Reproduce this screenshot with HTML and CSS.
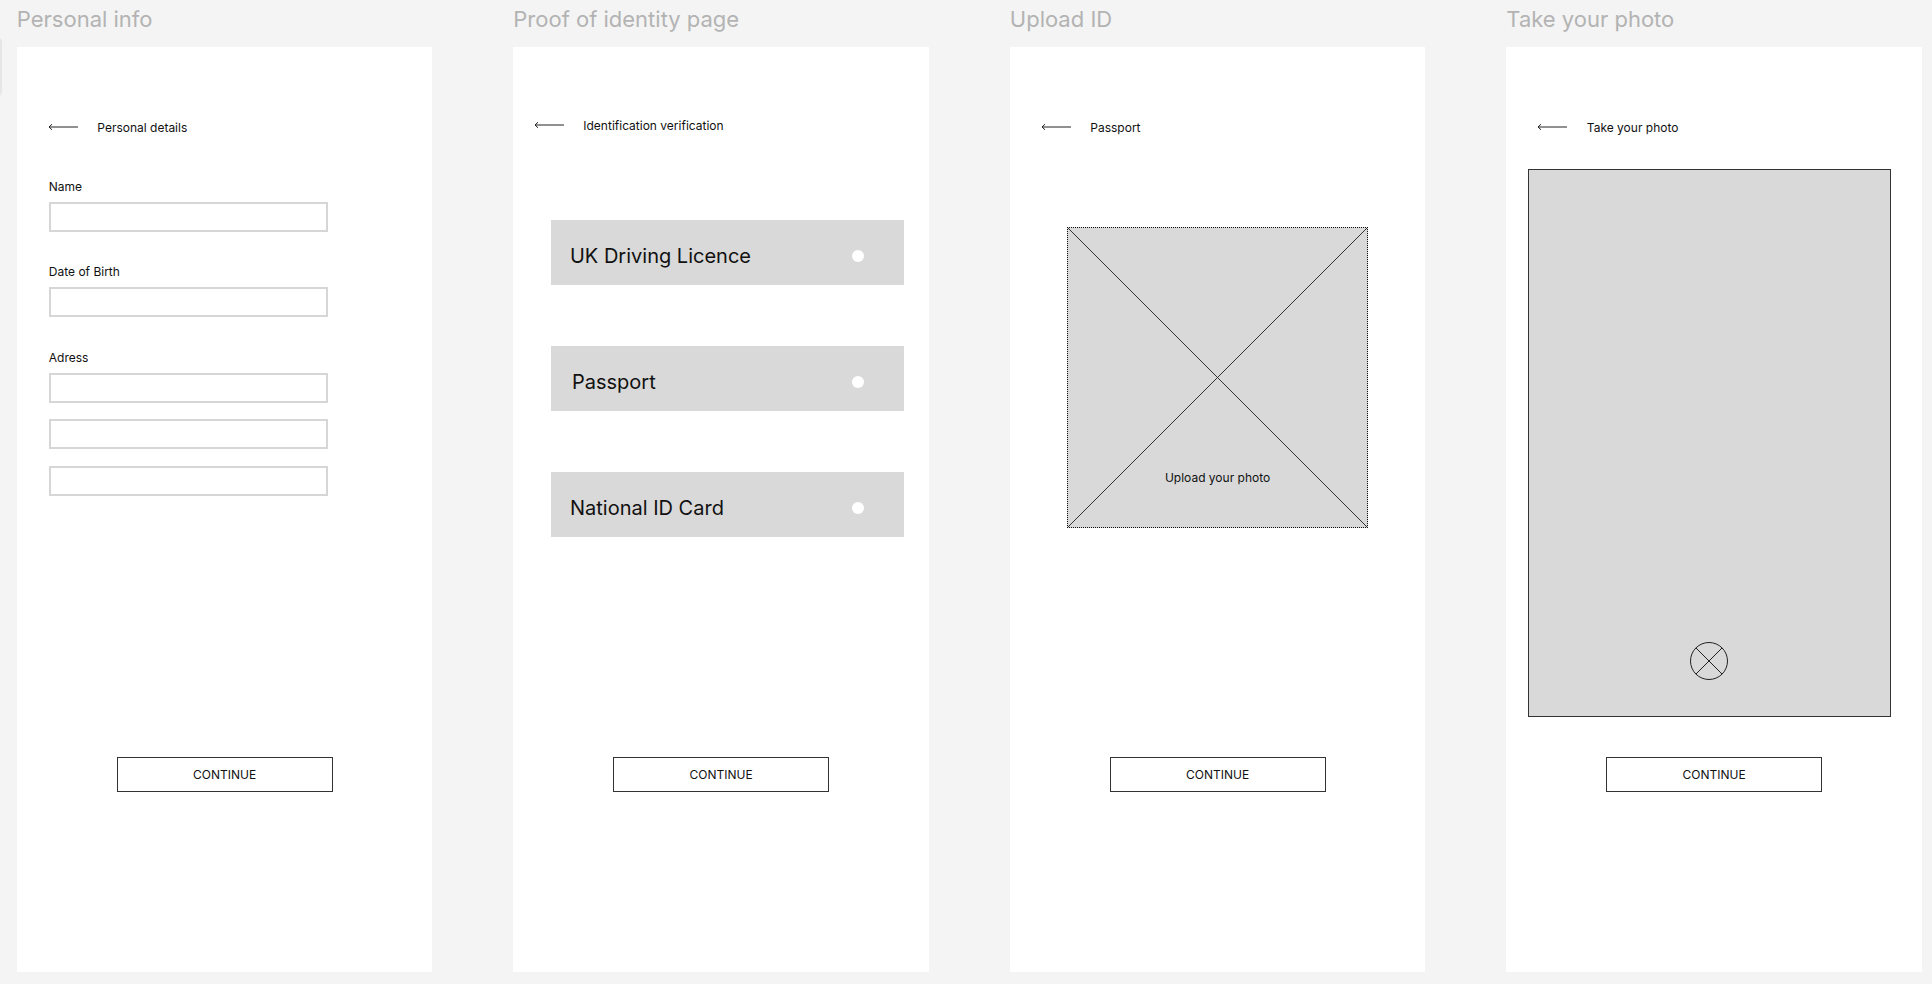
FILE: index.html
```html
<!DOCTYPE html>
<html lang="en">
<head>
<meta charset="utf-8">
<title>Identity verification wireframes</title>
<link rel="stylesheet" href="styles.css">
</head>
<body>
<div class="edge-tab"></div>
<main class="board">

  <section class="column">
    <h2 class="title">Personal info</h2>
    <div class="frame">
      <div class="header">
        <svg class="back" width="30" height="8" viewBox="0 0 30 8"><path d="M1 4H30M4 1.2L1 4L4 6.8" fill="none" stroke="#222" stroke-width="1"/></svg>
        <span>Personal details</span>
      </div>
      <div class="content form">
        <label class="label">Name</label>
        <div class="input"></div>
        <label class="label gap-top">Date of Birth</label>
        <div class="input"></div>
        <label class="label gap-top">Adress</label>
        <div class="input"></div>
        <div class="input stack"></div>
        <div class="input stack"></div>
      </div>
      <button class="continue">CONTINUE</button>
    </div>
  </section>

  <section class="column">
    <h2 class="title">Proof of identity page</h2>
    <div class="frame">
      <div class="header header-tight">
        <svg class="back" width="30" height="8" viewBox="0 0 30 8"><path d="M1 4H30M4 1.2L1 4L4 6.8" fill="none" stroke="#222" stroke-width="1"/></svg>
        <span>Identification verification</span>
      </div>
      <div class="content options">
        <div class="option"><span>UK Driving Licence</span><i class="dot"></i></div>
        <div class="option option-indent"><span>Passport</span><i class="dot"></i></div>
        <div class="option"><span>National ID Card</span><i class="dot"></i></div>
      </div>
      <button class="continue">CONTINUE</button>
    </div>
  </section>

  <section class="column">
    <h2 class="title">Upload ID</h2>
    <div class="frame">
      <div class="header">
        <svg class="back" width="30" height="8" viewBox="0 0 30 8"><path d="M1 4H30M4 1.2L1 4L4 6.8" fill="none" stroke="#222" stroke-width="1"/></svg>
        <span>Passport</span>
      </div>
      <div class="content upload-area">
        <div class="upload-box">
          <svg class="cross" viewBox="0 0 100 100" preserveAspectRatio="none"><path d="M0 0L100 100M100 0L0 100" stroke="#333" stroke-width="1" vector-effect="non-scaling-stroke" fill="none"/></svg>
          <span class="upload-text">Upload your photo</span>
        </div>
      </div>
      <button class="continue">CONTINUE</button>
    </div>
  </section>

  <section class="column">
    <h2 class="title">Take your photo</h2>
    <div class="frame">
      <div class="header">
        <svg class="back" width="30" height="8" viewBox="0 0 30 8"><path d="M1 4H30M4 1.2L1 4L4 6.8" fill="none" stroke="#222" stroke-width="1"/></svg>
        <span>Take your photo</span>
      </div>
      <div class="content camera-area">
        <div class="camera">
          <svg class="shutter" width="40" height="40" viewBox="0 0 40 40"><circle cx="20" cy="20" r="18.5" fill="none" stroke="#222" stroke-width="1"/><path d="M6.9 6.9L33.1 33.1M33.1 6.9L6.9 33.1" stroke="#222" stroke-width="1" fill="none"/></svg>
        </div>
      </div>
      <button class="continue">CONTINUE</button>
    </div>
  </section>

</main>
</body>
</html>
```

FILE: styles.css
```css
* { box-sizing: border-box; }

html, body {
  margin: 0;
  padding: 0;
  background: #f4f4f4;
  font-family: Inter, "Noto Sans", "Liberation Sans", sans-serif;
  color: #1a1a1a;
  overflow: hidden;
}

body {
  width: 1932px;
  height: 984px;
  position: relative;
}

.edge-tab {
  position: absolute;
  left: -9px;
  top: 37px;
  width: 11px;
  height: 60px;
  border-radius: 6px;
  background: #e6e6e6;
}

.board {
  display: flex;
  gap: 81px;
  padding-left: 16.8px;
}

.column {
  width: 415.5px;
  flex: none;
  display: flex;
  flex-direction: column;
}

.title {
  margin: 0;
  height: 47px;
  padding-top: 5px;
  line-height: 29px;
  font-size: 22px;
  font-weight: 400;
  color: #b3b3b3;
  white-space: nowrap;
}

.frame {
  background: #fff;
  height: 925px;
  padding-top: 72px;
  display: flex;
  flex-direction: column;
}

.header {
  height: 16px;
  display: flex;
  align-items: center;
  gap: 19.5px;
  padding-left: 31px;
  font-size: 12px;
  line-height: 15px;
  color: #111;
}

.header-tight {
  padding-left: 20.5px;
  margin-top: -2px;
  margin-bottom: 2px;
}

.back { display: block; flex: none; }

.content {
  height: 622px;
  flex: none;
}

/* Frame 1 form */
.form {
  padding-left: 32px;
  padding-top: 43.5px;
  display: flex;
  flex-direction: column;
  align-items: flex-start;
}

.label {
  font-size: 12px;
  line-height: 15px;
  color: #111;
  margin-bottom: 8px;
}

.label.gap-top { margin-top: 32.5px; }

.input {
  width: 279px;
  height: 30px;
  border: 2px solid #d6d6d6;
  background: #fff;
}

.input.stack { margin-top: 16.5px; }

/* Frame 2 options */
.options {
  padding-top: 85px;
  padding-left: 37.7px;
  display: flex;
  flex-direction: column;
  gap: 61px;
}

.option {
  width: 353px;
  height: 65px;
  background: #d9d9d9;
  display: flex;
  align-items: center;
  justify-content: space-between;
  padding: 6px 40px 0 19px;
  font-size: 20px;
  line-height: 24px;
  color: #111;
}

.option-indent { padding-left: 21px; }

.dot {
  display: block;
  width: 12px;
  height: 12px;
  border-radius: 50%;
  background: #fff;
}

/* Frame 3 upload */
.upload-area {
  padding-top: 92px;
  display: flex;
  justify-content: center;
  align-items: flex-start;
}

.upload-box {
  position: relative;
  width: 301px;
  height: 301px;
  background: #d9d9d9;
  border: 1px dotted #111;
  display: flex;
  flex-direction: column;
  justify-content: flex-end;
  align-items: center;
  padding-bottom: 42px;
}

.cross {
  position: absolute;
  inset: 0;
  width: 100%;
  height: 100%;
}

.upload-text {
  position: relative;
  font-size: 12px;
  line-height: 15px;
  color: #111;
}

/* Frame 4 camera */
.camera-area {
  padding-top: 34px;
  padding-left: 21.7px;
}

.camera {
  width: 363px;
  height: 548px;
  background: #d9d9d9;
  border: 1px solid #333;
  display: flex;
  flex-direction: column;
  justify-content: flex-end;
  align-items: center;
  padding-bottom: 35px;
}

.shutter { display: block; }

/* Continue button */
.continue {
  align-self: center;
  width: 216px;
  height: 35px;
  border: 1px solid #333;
  background: #fff;
  font-family: Inter, "Noto Sans", "Liberation Sans", sans-serif;
  font-size: 12px;
  color: #111;
  padding: 0;
  margin: 0;
}
```
